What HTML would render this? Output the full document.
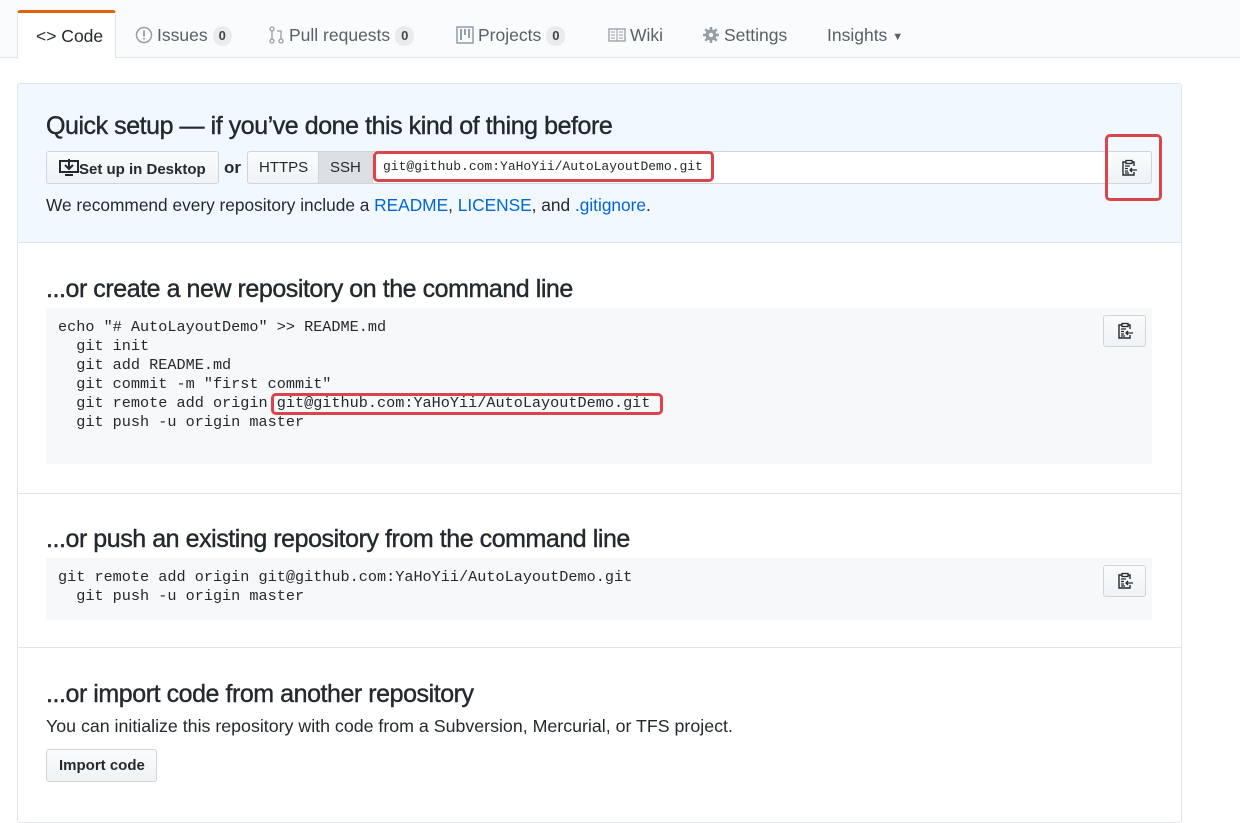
<!DOCTYPE html>
<html><head><meta charset="utf-8"><style>
*{box-sizing:border-box;margin:0;padding:0}
body{width:1240px;height:798px;background:#fff;font-family:"Liberation Sans",Helvetica,Arial,sans-serif;color:#24292e;position:relative;overflow:hidden}
.abs{position:absolute}
.nav{left:0;top:0;width:1240px;height:58px;background:#fafbfc;border-bottom:1px solid #e1e4e8}
.tab{position:absolute;top:24px;height:22px;line-height:22px;font-size:17.5px;color:#586069;white-space:nowrap}
.tab svg{vertical-align:-3px;margin-right:4px}
.cnt{display:inline-block;background:#e9ecef;border-radius:10px;font-size:13px;line-height:16px;font-weight:bold;color:#444;padding:2px 6px;margin-left:5px;vertical-align:1px}
.sel{left:17px;top:10px;width:99px;height:49px;background:#fff;border:1px solid #e1e4e8;border-top:3px solid #e36209;border-bottom:none;border-radius:3px 3px 0 0;font-size:17.5px;color:#24292e;padding:13px 0 0 18px}
.box{left:17px;top:83px;width:1165px;height:740px;border:1px solid #e1e4e8;border-radius:3px}
h3{position:absolute;left:46px;font-size:25px;font-weight:normal;letter-spacing:-0.45px;color:#24292e;-webkit-text-stroke:0.4px #24292e}
.btn{position:absolute;background:linear-gradient(#fafbfc,#eff3f6);border:1px solid #d1d5da;border-radius:3px;font-size:15px;font-weight:bold;color:#24292e}
pre{position:absolute;left:46px;width:1106px;background:#f6f8fa;font-family:"Liberation Mono",monospace;font-size:15.2px;line-height:19px;color:#24292e;padding:10px 12px}
.red{position:absolute;border:3px solid #d9454a;border-radius:5px}
.sep{position:absolute;left:17px;width:1165px;height:1px;background:#e1e4e8}
a{color:#0366d6;text-decoration:none}
.cp{display:block;margin:0 auto}
</style></head><body>
<div class="abs nav"></div>
<div class="abs sel">&lt;&gt; Code</div>
<div class="tab" style="left:135px"><svg width="18" height="18" viewBox="0 0 18 18"><circle cx="9" cy="9" r="7.5" fill="none" stroke="#959da5" stroke-width="1.5"/><path d="M9 4.5v6M9 12v1.5" stroke="#959da5" stroke-width="1.8"/></svg>Issues<span class="cnt">0</span></div>
<div class="tab" style="left:269px"><svg width="16" height="18" viewBox="0 0 16 18"><circle cx="3" cy="3" r="2" fill="none" stroke="#959da5" stroke-width="1.3"/><circle cx="3" cy="15" r="2" fill="none" stroke="#959da5" stroke-width="1.3"/><circle cx="12" cy="15" r="2" fill="none" stroke="#959da5" stroke-width="1.3"/><path d="M3 5v8M12 13V5H8" stroke="#959da5" stroke-width="1.3" fill="none"/></svg>Pull requests<span class="cnt">0</span></div>
<div class="tab" style="left:456px"><svg width="18" height="18" viewBox="0 0 18 18"><rect x="1" y="1" width="16" height="16" fill="none" stroke="#959da5" stroke-width="1.5"/><path d="M5 3v11M9 3v6M13 3v9" stroke="#959da5" stroke-width="2"/></svg>Projects<span class="cnt">0</span></div>
<div class="tab" style="left:608px"><svg width="18" height="18" viewBox="0 0 18 18"><rect x="1" y="3" width="16" height="12" fill="none" stroke="#959da5" stroke-width="1.3"/><path d="M9 3v12M3 6h4M3 9h4M3 12h4M11 6h4M11 9h4M11 12h4" stroke="#959da5"/></svg>Wiki</div>
<div class="tab" style="left:702px"><svg width="18" height="18" viewBox="0 0 18 18"><circle cx="9" cy="9" r="5.5" fill="#959da5"/><path d="M9 1v16M1 9h16M3.3 3.3l11.4 11.4M14.7 3.3L3.3 14.7" stroke="#959da5" stroke-width="2.5"/><circle cx="9" cy="9" r="2.2" fill="#fafbfc"/></svg>Settings</div>
<div class="tab" style="left:827px">Insights <span style="font-size:11px;vertical-align:1px">▼</span></div>

<div class="abs box"></div>
<div class="abs" style="left:18px;top:84px;width:1163px;height:159px;background:#f1f8ff;border-bottom:1px solid #e1e4e8"></div>
<h3 style="top:112px">Quick setup — if you’ve done this kind of thing before</h3>
<div class="btn" style="left:46px;top:151px;width:173px;height:33px;padding:7px 0 0 12px">
<svg width="20" height="18" viewBox="0 0 20 18" style="vertical-align:-3px"><rect x="1" y="2" width="18" height="11" fill="none" stroke="#24292e" stroke-width="2"/><path d="M10 0v9M6 6l4 4 4-4M6 16h8" stroke="#24292e" stroke-width="2" fill="none"/></svg>Set up in Desktop</div>
<div class="abs" style="left:224px;top:158px;font-size:17px;font-weight:bold">or</div>
<div class="btn" style="left:247px;top:151px;width:72px;height:33px;border-radius:3px 0 0 3px;padding:7px 0 0 11px;font-weight:normal;font-size:15px">HTTPS</div>
<div class="btn" style="left:318px;top:151px;width:55px;height:33px;border-radius:0;padding:7px 0 0 11px;font-weight:normal;background:#dcdfe3">SSH</div>
<div class="abs" style="left:372px;top:151px;width:734px;height:33px;background:#fff;border:1px solid #d1d5da"></div>
<div class="abs" style="left:383px;top:159px;font-family:'Liberation Mono',monospace;font-size:13px">git@github.com:YaHoYii/AutoLayoutDemo.git</div>
<div class="red" style="left:373px;top:151px;width:341px;height:31px"></div>
<div class="btn" style="left:1106px;top:151px;width:46px;height:33px;border-radius:0 3px 3px 0;padding-top:7px"><svg class="cp" width="16" height="18" viewBox="0 0 16 18"><path d="M3 3h2M11 3h2v4M13 13v3H2V3h1" fill="none" stroke="#24292e" stroke-width="1.4"/><rect x="5" y="1.5" width="6" height="3" fill="none" stroke="#24292e" stroke-width="1.3"/><path d="M4 7h5M4 9.5h3M4 12h3M4 14h4M16 11H9M11 9l-2 2 2 2" fill="none" stroke="#24292e" stroke-width="1.3"/></svg></div>
<div class="red" style="left:1105px;top:134px;width:57px;height:67px"></div>
<div class="abs" style="left:46px;top:195px;font-size:17.3px">We recommend every repository include a <a>README</a>, <a>LICENSE</a>, and <a>.gitignore</a>.</div>

<h3 style="top:275px">...or create a new repository on the command line</h3>
<pre style="top:308px;height:156px">echo "# AutoLayoutDemo" &gt;&gt; README.md
  git init
  git add README.md
  git commit -m "first commit"
  git remote add origin git@github.com:YaHoYii/AutoLayoutDemo.git
  git push -u origin master</pre>
<div class="red" style="left:271px;top:393px;width:392px;height:22px"></div>
<div class="btn" style="left:1103px;top:315px;width:43px;height:32px;padding-top:6px"><svg class="cp" width="16" height="18" viewBox="0 0 16 18"><path d="M3 3h2M11 3h2v4M13 13v3H2V3h1" fill="none" stroke="#24292e" stroke-width="1.4"/><rect x="5" y="1.5" width="6" height="3" fill="none" stroke="#24292e" stroke-width="1.3"/><path d="M4 7h5M4 9.5h3M4 12h3M4 14h4M16 11H9M11 9l-2 2 2 2" fill="none" stroke="#24292e" stroke-width="1.3"/></svg></div>
<div class="sep" style="top:493px"></div>

<h3 style="top:525px">...or push an existing repository from the command line</h3>
<pre style="top:558px;height:62px">git remote add origin git@github.com:YaHoYii/AutoLayoutDemo.git
  git push -u origin master</pre>
<div class="btn" style="left:1103px;top:565px;width:43px;height:32px;padding-top:6px"><svg class="cp" width="16" height="18" viewBox="0 0 16 18"><path d="M3 3h2M11 3h2v4M13 13v3H2V3h1" fill="none" stroke="#24292e" stroke-width="1.4"/><rect x="5" y="1.5" width="6" height="3" fill="none" stroke="#24292e" stroke-width="1.3"/><path d="M4 7h5M4 9.5h3M4 12h3M4 14h4M16 11H9M11 9l-2 2 2 2" fill="none" stroke="#24292e" stroke-width="1.3"/></svg></div>
<div class="sep" style="top:647px"></div>

<h3 style="top:680px">...or import code from another repository</h3>
<div class="abs" style="left:46px;top:716px;font-size:17.8px">You can initialize this repository with code from a Subversion, Mercurial, or TFS project.</div>
<div class="btn" style="left:46px;top:749px;width:111px;height:33px;padding:7px 0 0 12px">Import code</div>
</body></html>
